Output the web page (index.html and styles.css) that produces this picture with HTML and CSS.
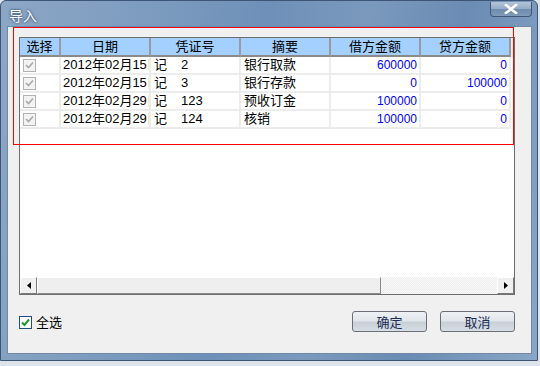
FILE: index.html
```html
<!DOCTYPE html>
<html>
<head>
  <meta charset="utf-8">
  <title>导入</title>
  <link rel="stylesheet" href="styles.css">
</head>
<body>
  <div class="window">
    <div class="titlebar">
      <span class="title">导入</span>
      <div class="close-btn">
        <svg width="14" height="10" viewBox="0 0 14 10">
          <path d="M2 1 L12 9 M12 1 L2 9" stroke="#fff" stroke-width="2.6" stroke-linecap="square"/>
        </svg>
      </div>
    </div>
    <div class="client">
      <div class="highlight"></div>
      <div class="grid">
        <div class="row head">
          <div class="cell">选择</div>
          <div class="cell">日期</div>
          <div class="cell">凭证号</div>
          <div class="cell">摘要</div>
          <div class="cell">借方金额</div>
          <div class="cell">贷方金额</div>
        </div>
        <div class="row">
          <div class="cell chk"><span class="mini-box"><svg width="11" height="11" viewBox="0 0 11 11"><path d="M2 5 L4.5 7.5 L9 2.5" fill="none" stroke="#a8a8a8" stroke-width="1.6"/></svg></span></div>
          <div class="cell date">2012年02月15日</div>
          <div class="cell"><span class="kind">记</span>2</div>
          <div class="cell">银行取款</div>
          <div class="cell num">600000</div>
          <div class="cell num">0</div>
        </div>
        <div class="row">
          <div class="cell chk"><span class="mini-box"><svg width="11" height="11" viewBox="0 0 11 11"><path d="M2 5 L4.5 7.5 L9 2.5" fill="none" stroke="#a8a8a8" stroke-width="1.6"/></svg></span></div>
          <div class="cell date">2012年02月15日</div>
          <div class="cell"><span class="kind">记</span>3</div>
          <div class="cell">银行存款</div>
          <div class="cell num">0</div>
          <div class="cell num">100000</div>
        </div>
        <div class="row">
          <div class="cell chk"><span class="mini-box"><svg width="11" height="11" viewBox="0 0 11 11"><path d="M2 5 L4.5 7.5 L9 2.5" fill="none" stroke="#a8a8a8" stroke-width="1.6"/></svg></span></div>
          <div class="cell date">2012年02月29日</div>
          <div class="cell"><span class="kind">记</span>123</div>
          <div class="cell">预收订金</div>
          <div class="cell num">100000</div>
          <div class="cell num">0</div>
        </div>
        <div class="row">
          <div class="cell chk"><span class="mini-box"><svg width="11" height="11" viewBox="0 0 11 11"><path d="M2 5 L4.5 7.5 L9 2.5" fill="none" stroke="#a8a8a8" stroke-width="1.6"/></svg></span></div>
          <div class="cell date">2012年02月29日</div>
          <div class="cell"><span class="kind">记</span>124</div>
          <div class="cell">核销</div>
          <div class="cell num">100000</div>
          <div class="cell num">0</div>
        </div>
        <div class="empty"></div>
        <div class="hscroll">
          <div class="sb-btn"><svg width="4" height="7" viewBox="0 0 4 7"><path d="M4 0 L0 3.5 L4 7 Z" fill="#000"/></svg></div>
          <div class="sb-thumb"></div>
          <div class="sb-track"></div>
          <div class="sb-btn"><svg width="4" height="7" viewBox="0 0 4 7"><path d="M0 0 L4 3.5 L0 7 Z" fill="#000"/></svg></div>
        </div>
      </div>
      <div class="footer">
        <label class="check-all">
          <span class="box"><svg width="11" height="11" viewBox="0 0 11 11"><path d="M2 5.5 L4.5 8 L9 2.5" fill="none" stroke="#1f9a2a" stroke-width="2"/></svg></span>
          全选
        </label>
        <div class="buttons">
          <div class="btn">确定</div>
          <div class="btn">取消</div>
        </div>
      </div>
    </div>
  </div>
</body>
</html>
```

FILE: styles.css
```css
body {
  margin: 0;
  background: #dde4ec;
  font-family: "Liberation Sans", "Noto Sans CJK SC", sans-serif;
  font-size: 13px;
}

.window {
  width: 538px;
  height: 361px;
  box-sizing: border-box;
  border: 1px solid #3d5677;
  border-radius: 6px 6px 0 0;
  padding: 0 5px 6px 6px;
  display: flex;
  flex-direction: column;
  background: linear-gradient(100deg, #8ca7c6 0%, #7f9dc0 22%, #6e90b8 45%, #7b99bd 62%, #6a8bb3 78%, #8aa6c7 100%);
}

.titlebar {
  height: 25px;
  display: flex;
  align-items: flex-start;
}

.title {
  color: #fff;
  font-family: "Noto Sans CJK SC", sans-serif;
  font-size: 14px;
  line-height: 16px;
  margin: 6px 0 0 2px;
  text-shadow: 0 0 3px #3b5474, 0 0 2px #3b5474;
}

.close-btn {
  margin-left: auto;
  margin-top: 1px;
  width: 42px;
  height: 15px;
  box-sizing: border-box;
  border: 1px solid #3f5878;
  border-top: none;
  border-radius: 0 0 4px 4px;
  background: linear-gradient(#b3c4d8 0%, #94abc6 50%, #6f8bae 51%, #7f9aba 100%);
  display: flex;
  align-items: center;
  justify-content: center;
}

.client {
  flex: 1;
  position: relative;
  background: #f0f0f0;
  border: 1px solid #6f89a6;
  padding: 10px 0 0 11px;
}

.highlight {
  position: absolute;
  left: 5px;
  top: 0;
  width: 499px;
  height: 116px;
  border: 1px solid #ff0000;
  z-index: 2;
}

.grid {
  width: 496px;
  height: 258px;
  box-sizing: border-box;
  border: 1px solid #6e6e6e;
  background: #fff;
  display: flex;
  flex-direction: column;
}

.row {
  display: grid;
  grid-template-columns: 41px 90px 90px 90px 90px 90px;
  height: 18px;
}

.row .cell {
  box-sizing: border-box;
  border-right: 2px solid #ececec;
  border-bottom: 2px solid #ececec;
  line-height: 16px;
  padding-left: 3px;
  white-space: nowrap;
  overflow: hidden;
}

.row.head {
  height: 19px;
  background: #f0f0f0;
}

.row.head .cell {
  background: #a3d0ff;
  border-right: 2px solid #9a9a9a;
  border-bottom: 2px solid #8a8a8a;
  text-align: center;
  padding-left: 0;
  line-height: 17px;
}

.row .date {
  padding-left: 2px;
}

.row .num {
  color: #0000ff;
  font-size: 12px;
  text-align: right;
  padding-right: 2px;
}

.kind {
  margin-right: 14px;
}

.chk {
  display: flex;
  align-items: center;
}

.mini-box {
  width: 13px;
  height: 13px;
  box-sizing: border-box;
  border: 1px solid #b2b2b2;
  background: #f3f3f3;
  display: flex;
  align-items: center;
  justify-content: center;
}

.empty {
  flex: 1;
}

.hscroll {
  height: 17px;
  display: flex;
  background: #f4f4f4;
}

.sb-btn {
  width: 17px;
  height: 17px;
  box-sizing: border-box;
  background: #f0f0f0;
  border: 1px solid;
  border-color: #fff #7a7a7a #7a7a7a #fff;
  display: flex;
  align-items: center;
  justify-content: center;
}

.sb-thumb {
  width: 344px;
  box-sizing: border-box;
  background: #efefef;
  border: 1px solid;
  border-color: #fff #8a8a8a #8a8a8a #fff;
}

.sb-track {
  flex: 1;
  background: repeating-conic-gradient(#ececec 0 25%, #fbfbfb 0 50%) 0 0 / 2px 2px;
}

.footer {
  margin-top: 16px;
  width: 496px;
  display: flex;
  align-items: flex-start;
}

.check-all {
  display: flex;
  align-items: center;
  margin-top: 3px;
  font-family: "Noto Sans CJK SC", sans-serif;
  font-size: 13px;
  line-height: 16px;
}

.check-all .box {
  width: 13px;
  height: 13px;
  box-sizing: border-box;
  border: 1px solid #1c4f7e;
  background: #fff;
  margin-right: 4px;
  display: flex;
  align-items: center;
  justify-content: center;
}

.buttons {
  margin-left: auto;
  display: flex;
  gap: 13px;
}

.btn {
  width: 75px;
  height: 21px;
  box-sizing: border-box;
  border: 1px solid #6b6f75;
  border-radius: 3px;
  background: linear-gradient(#eef1f4 0%, #e1e6eb 45%, #c8d0d9 55%, #d6dde4 100%);
  color: #1b2c52;
  text-align: center;
  font-family: "Noto Sans CJK SC", sans-serif;
  font-size: 13px;
  line-height: 19px;
}
```
